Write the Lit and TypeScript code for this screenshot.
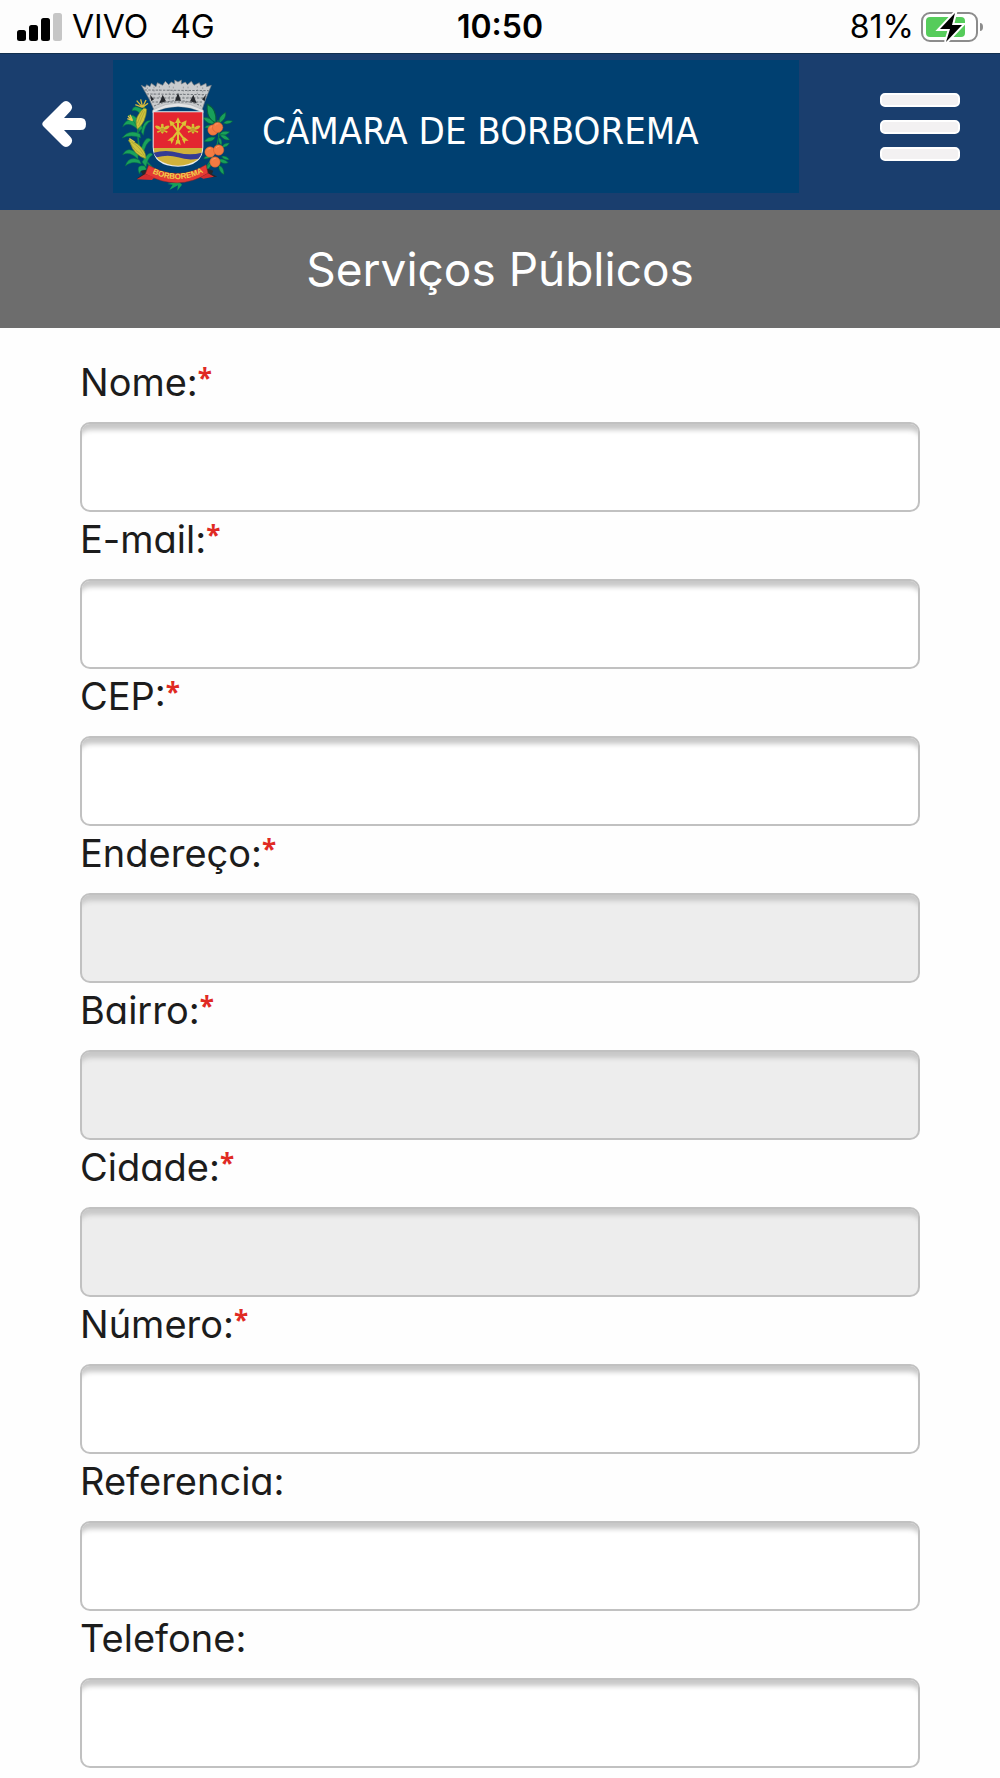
import { LitElement, html, css, svg } from "lit";
import { customElement, property } from "lit/decorators.js";

interface Field {
  id: string;
  label: string;
  required?: boolean;
  locked?: boolean;
  type?: string;
}

const FIELDS: Field[] = [
  { id: "nome", label: "Nome:", required: true },
  { id: "email", label: "E-mail:", required: true, type: "email" },
  { id: "cep", label: "CEP:", required: true },
  { id: "endereco", label: "Endereço:", required: true, locked: true },
  { id: "bairro", label: "Bairro:", required: true, locked: true },
  { id: "cidade", label: "Cidade:", required: true, locked: true },
  { id: "numero", label: "Número:", required: true },
  { id: "referencia", label: "Referencia:" },
  { id: "telefone", label: "Telefone:", type: "tel" },
];

@customElement("status-bar")
class StatusBar extends LitElement {
  static styles = css`
    :host {
      display: grid;
      grid-template-columns: 1fr auto 1fr;
      align-items: center;
      height: 53px;
      padding: 0 16px;
      background: #fdfdfd;
      color: #000;
      font: 32px/36px Inter, "Liberation Sans", sans-serif;
    }
    .carrier,
    .power {
      display: flex;
      align-items: center;
    }
    .carrier {
      gap: 10px;
    }
    .network {
      margin-left: 12px;
    }
    .power {
      justify-content: flex-end;
      gap: 6px;
    }
    .time {
      font-weight: 600;
    }
    svg {
      display: block;
    }
  `;
  render() {
    return html`
      <div class="carrier">
        <svg width="46" height="30" viewBox="0 0 46 30" aria-hidden="true">
          <rect x="1" y="18" width="9" height="11" rx="2.5" />
          <rect x="13" y="13" width="9" height="16" rx="2.5" />
          <rect x="25" y="6" width="9" height="23" rx="2.5" />
          <rect x="37" y="1" width="9" height="28" rx="2.5" fill="#c6c6c6" />
        </svg>
        <span>VIVO</span><span class="network">4G</span>
      </div>
      <div class="time">10:50</div>
      <div class="power">
        <span>81%</span>
        <svg width="64" height="32" viewBox="0 0 64 32" aria-hidden="true">
          <rect x="2" y="2" width="55" height="28" rx="8" fill="#fff" stroke="#8c8c8c" stroke-width="2" />
          <rect x="6" y="6" width="39" height="20" rx="4" fill="#56cc5b" />
          <path d="M60 12q3 0 3 4t-3 4z" fill="#8c8c8c" />
          <path d="M35 2L20 18h10l-4 13 16-17H32z" stroke="#fff" stroke-width="4" />
          <path d="M35 2L20 18h10l-4 13 16-17H32z" />
        </svg>
      </div>
    `;
  }
}

/** One feathered leaf, drawn from its stem outwards. */
const leaf = (x: number, y: number, angle: number, size = 1) => svg`
  <path
    transform="translate(${x} ${y}) rotate(${angle}) scale(${size})"
    d="M0 0Q10 -13 32 -3Q20 9 0 0Z"
    fill="#18a05a" stroke="#075f3c" stroke-width="1.5" />`;

const orange = (x: number, y: number) => svg`
  <circle cx=${x} cy=${y} r="15.5" fill="#f47b42" stroke="#cf5a2b" stroke-width="1.5" />
  <path d="M${x - 8} ${y - 6}q4 -6 10 -5" fill="none" stroke="#ffa575" stroke-width="2" />`;

const blade = (d: string) => svg`<path d=${d} fill="#1aa35b" stroke="#087044" stroke-width="1.5" />`;

const arrow = (angle: number) => svg`
  <g transform="translate(204 214) rotate(${angle})">
    <path d="M-3 -28V28H3V-28Z" fill="#dcc235" />
    <path d="M0 -42L9 -25H-9Z" fill="#dcc235" />
    <path d="M-8 42L-5 26H5L8 42L0 36Z" fill="#dcc235" />
  </g>`;

const bee = (x: number) => svg`
  <g transform="translate(${x} 206)" fill="#d8be34">
    <path d="M-3 -2Q-14 -12 -22 -8Q-20 3 -4 3ZM3 -2Q14 -12 22 -8Q20 3 4 3Z" />
    <path d="M-4 4L-16 8L-14 13L-3 7ZM4 4L16 8L14 13L3 7Z" />
    <ellipse cx="0" cy="2" rx="5" ry="13" />
    <circle cx="0" cy="-11" r="4" />
    <path d="M-5 1H5M-4 7H4" stroke="#8a6420" stroke-width="2" />
  </g>`;

const crest = svg`
  <g>
    <path d="M104 140Q76 190 86 250Q92 310 180 362" fill="none" stroke="#138a4e" stroke-width="5" />
    <path d="M324 180Q338 250 290 320Q262 350 196 364" fill="none" stroke="#138a4e" stroke-width="4" />
    ${blade("M92 196Q54 160 38 200Q60 180 90 216Z")}
    ${blade("M90 222Q58 205 36 234Q64 222 92 234Z")}
    ${blade("M88 212Q62 166 54 166Q82 160 98 206Z")}
    ${blade("M94 216Q100 176 124 182Q104 190 100 226Z")}
    ${blade("M84 284Q54 254 38 284Q60 272 84 298Z")}
    ${blade("M88 300Q56 286 46 318Q66 300 94 312Z")}
    ${blade("M94 264Q108 222 124 240Q108 246 100 282Z")}
    ${blade("M96 306Q120 268 128 284Q112 294 108 322Z")}
    ${blade("M104 318Q76 312 88 342Q92 326 112 332Z")}
    ${blade("M100 150Q70 130 66 152Q84 146 94 170Z")}
    <path d="M82 208Q72 180 88 160Q102 138 110 148Q108 188 82 208Z" fill="#cfc43c" stroke="#6f8428" stroke-width="2" />
    <path d="M86 198Q94 176 104 154M82 190Q90 168 100 150" fill="none" stroke="#948f2a" stroke-width="1.5" />
    <path d="M62 240Q50 236 60 248Q72 286 108 296Q108 262 62 240Z" fill="#cfc43c" stroke="#6f8428" stroke-width="2" />
    <path d="M64 246Q90 260 104 290M62 252Q76 274 98 286" fill="none" stroke="#948f2a" stroke-width="1.5" />
    <path d="M98 142L80 122M98 142L92 118M98 142L108 120M98 142L76 134M98 142L114 130" stroke="#d5b93c" stroke-width="4" />
    <path d="M68 182L54 168M68 182L60 164M68 182L52 176M74 246L58 236" stroke="#e5c94b" stroke-width="4" />
  </g>
  <g>
    ${leaf(318, 188, -110, 1.9)} ${leaf(314, 190, -150, 1.2)} ${leaf(328, 190, -55, 1.2)}
    ${leaf(340, 190, -8, 0.9)} ${leaf(308, 196, 170, 0.8)} ${leaf(328, 224, -10, 1)}
    ${leaf(330, 226, 30, 1)} ${leaf(316, 232, 165, 1.1)} ${leaf(326, 232, 75, 0.8)}
    ${leaf(336, 262, -25, 0.8)} ${leaf(334, 290, 25, 0.8)} ${leaf(302, 288, 165, 0.7)}
    ${leaf(326, 316, 65, 1)} ${leaf(302, 308, 125, 0.8)} ${leaf(324, 300, 20, 1)}
    ${orange(309, 210)} ${orange(323, 202)} ${orange(300, 276)} ${orange(326, 270)} ${orange(315, 306)}
  </g>
  <g>
    <path
      d="M94 76L106 82L110 74L120 80L124 70L138 80L142 68L158 76L166 64L176 74L184 66L194 72V60L204 66L214 60V72L226 66L232 74L244 64L252 76L268 68L272 78L288 70L290 80L304 76L286 120L276 150Q204 116 132 150L118 118Z"
      fill="#c9cbcd" stroke="#777b80" stroke-width="2" />
    <path
      d="M104 90L296 92M110 102L290 104M118 114L284 114M126 126L280 126M132 138Q204 106 274 138"
      fill="none" stroke="#71767b" stroke-width="3" stroke-dasharray="7 4" />
    <path d="M112 82V96M132 80V120M148 78V116M178 78V120M190 80V116M220 80V116M234 80V120M262 78V118M278 82V116" stroke="#83878c" stroke-width="2" stroke-dasharray="5 5" />
    <path d="M204 98L195 122H213ZM158 104L148 130L168 124ZM250 104L240 124L260 130ZM120 104L124 124L132 118ZM288 104L284 124L276 118Z" fill="#26292e" />
    <path d="M128 150Q204 108 280 150V158Q204 122 128 158Z" fill="#e4e5e6" stroke="#85898d" />
  </g>
  <g>
    <path d="M128 154H280V260Q280 318 204 320Q128 318 128 260Z" fill="#e8edf0" />
    <path d="M131 157H277V264H131Z" fill="#e32630" />
    <path d="M131 264H277Q276 286 262 299Q238 316 204 317Q170 316 146 299Q132 286 131 264Z" fill="#d0b23b" />
    <path d="M131 278Q168 268 204 278T275 278Q272 290 265 296Q234 302 204 292T140 292Q134 286 131 278Z" fill="#353b94" />
    ${arrow(0)} ${arrow(38)} ${arrow(-38)} ${bee(157)} ${bee(249)}
  </g>
  <g>
    <path d="M196 366L172 372L188 374L178 390L204 376L202 392L216 374L204 362Z" fill="#16a159" />
    <path d="M112 328L92 334L98 343L80 356L126 358L128 344ZM292 326L310 332L306 342L322 350L284 354L278 340Z" fill="#25272b" />
    <path d="M116 316Q204 366 288 314L294 340Q204 396 106 342Z" fill="#e43a35" stroke="#8d2424" stroke-width="1.5" />
    <path d="M106 342L80 358L126 360L134 352ZM294 340L312 350L280 356L272 352Z" fill="#d32d30" />
    <path id="ribbon" d="M116 334Q204 382 291 331" fill="none" />
    <text font-family="Liberation Sans, sans-serif" font-size="24" font-weight="700" fill="#f0cf4b">
      <textPath href="#ribbon" startOffset="50%" text-anchor="middle">BORBOREMA</textPath>
    </text>
  </g>`;

@customElement("site-header")
class SiteHeader extends LitElement {
  static styles = css`
    :host {
      display: flex;
      box-sizing: border-box;
      height: 157px;
      padding: 6px 40px 17px 42px;
      background: #1a3e6e;
      border-top: 1px solid #12304f;
    }
    .back,
    .menu {
      display: flex;
      flex: none;
      margin: 0;
      padding: 0;
      border: 0;
      background: none;
      cursor: pointer;
    }
    .back {
      width: 71px;
      align-items: center;
      padding-bottom: 5px;
    }
    .brand {
      display: flex;
      flex: 1;
      align-items: center;
      background: #004071;
      color: #fff;
      font: 38px/46px "DejaVu Sans Condensed", "DejaVu Sans", sans-serif;
      font-stretch: condensed;
      text-decoration: none;
      white-space: nowrap;
    }
    .crest {
      flex: none;
      width: 140px;
      height: 140px;
      margin-right: 9px;
    }
    .name {
      padding-top: 9px;
    }
    .menu {
      flex-direction: column;
      justify-content: center;
      gap: 13px;
      width: 80px;
      margin-left: 81px;
    }
    .bar {
      width: 100%;
      height: 14px;
      border: 2px solid #fff;
      border-radius: 5px;
      box-sizing: border-box;
      background: #f3f1f2;
    }
    svg {
      display: block;
    }
  `;
  render() {
    return html`
      <button class="back" aria-label="Voltar">
        <svg width="45" height="48" viewBox="0 0 45 48" aria-hidden="true">
          <path
            d="M1.500 21.500L20 3Q24 -1 28 3Q32 7 28.500 11L22 18H39Q44 18 44 24T39 30H22L28.500 37Q32 41 28 45Q24 49 20 45L1.500 26.500Q-1 24 1.500 21.500Z"
            fill="#fff" />
        </svg>
      </button>
      <a class="brand" href="#inicio">
        <svg class="crest" viewBox="9 -9 420 420" aria-hidden="true">${crest}</svg>
        <span class="name">CÂMARA DE BORBOREMA</span>
      </a>
      <button class="menu" aria-label="Menu">
        <span class="bar"></span><span class="bar"></span><span class="bar"></span>
      </button>
    `;
  }
}

@customElement("form-field")
class FormField extends LitElement {
  @property({ attribute: false }) field!: Field;
  static styles = css`
    :host {
      display: flex;
      flex-direction: column;
    }
    .label {
      display: flex;
      box-sizing: border-box;
      height: 67px;
      padding: 4px 0 0;
      color: #1c1c1c;
      font: 38px/46px Inter, "Liberation Sans", sans-serif;
      font-feature-settings: "cv11";
    }
    .required {
      color: #e02a24;
      font: 700 26px/38px "Open Sans", "Liberation Sans", sans-serif;
    }
    .input {
      box-sizing: border-box;
      width: 100%;
      height: 90px;
      margin: 0;
      padding: 0 20px;
      border: 2px solid #c1c1c1;
      border-radius: 10px;
      outline: 0;
      background: #fff;
      box-shadow: inset 0 10px 5px -4px #c8c8c8;
      color: #1c1c1c;
      font: 32px/40px Inter, "Liberation Sans", sans-serif;
    }
    .input:disabled {
      background: #ededed;
    }
  `;
  render() {
    const { id, label, required, locked, type } = this.field;
    return html`
      <label class="label" for=${id}>
        ${label}${required ? html`<span class="required">*</span>` : ""}
      </label>
      <input
        class="input"
        id=${id}
        name=${id}
        type=${type ?? "text"}
        ?required=${required}
        ?disabled=${locked} />
    `;
  }
}

@customElement("app-root")
class AppRoot extends LitElement {
  static styles = css`
    :host {
      display: block;
      min-height: 100vh;
      background: #fefefe;
    }
    .title {
      margin: 0;
      padding: 31px 0;
      background: #6d6d6d;
      color: #fff;
      font: 400 46px/56px Inter, "Liberation Sans", sans-serif;
      font-feature-settings: "cv11";
      text-align: center;
    }
    .form {
      padding: 27px 8% 9px;
    }
  `;
  render() {
    return html`
      <status-bar></status-bar>
      <site-header></site-header>
      <main>
        <h1 class="title">Serviços Públicos</h1>
        <form class="form">
          ${FIELDS.map((f) => html`<form-field .field=${f}></form-field>`)}
        </form>
      </main>
    `;
  }
}
